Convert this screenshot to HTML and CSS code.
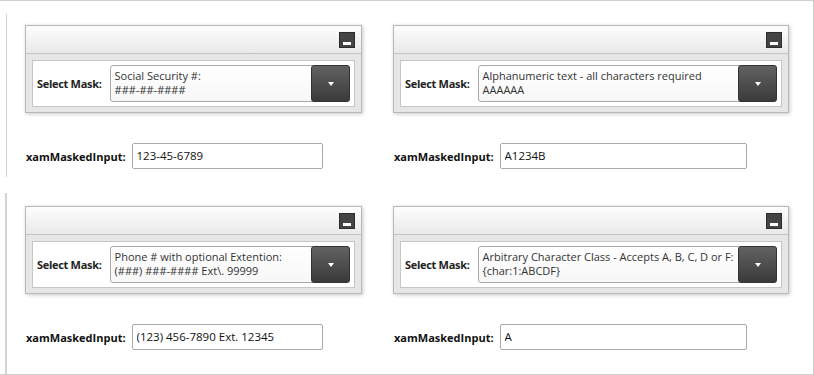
FILE: index.html
```html
<!DOCTYPE html>
<html lang="en">
<head>
  <meta charset="UTF-8">
  <title>xamMaskedInput Masks</title>
  <link rel="stylesheet" href="styles.css">
</head>
<body>
  <div class="frame">
    <div class="section section-top">
      <div class="column">
        <div class="panel">
          <div class="panel-header"><span class="min-btn"></span></div>
          <div class="panel-body">
            <div class="mask-box">
              <span class="mask-label">Select Mask:</span>
              <div class="combo">
                <div class="combo-text">Social Security #:<br>###-##-####</div>
                <span class="combo-btn"></span>
              </div>
            </div>
          </div>
        </div>
        <div class="input-row">
          <label class="input-label">xamMaskedInput:</label>
          <input class="masked-input narrow" type="text" value="123-45-6789">
        </div>
      </div>
      <div class="column">
        <div class="panel">
          <div class="panel-header"><span class="min-btn"></span></div>
          <div class="panel-body">
            <div class="mask-box">
              <span class="mask-label">Select Mask:</span>
              <div class="combo">
                <div class="combo-text">Alphanumeric text - all characters required<br>AAAAAA</div>
                <span class="combo-btn"></span>
              </div>
            </div>
          </div>
        </div>
        <div class="input-row">
          <label class="input-label">xamMaskedInput:</label>
          <input class="masked-input wide" type="text" value="A1234B">
        </div>
      </div>
    </div>

    <div class="section section-bottom">
      <div class="column">
        <div class="panel">
          <div class="panel-header"><span class="min-btn"></span></div>
          <div class="panel-body">
            <div class="mask-box">
              <span class="mask-label">Select Mask:</span>
              <div class="combo">
                <div class="combo-text">Phone # with optional Extention:<br>(###) ###-#### Ext\. 99999</div>
                <span class="combo-btn"></span>
              </div>
            </div>
          </div>
        </div>
        <div class="input-row">
          <label class="input-label">xamMaskedInput:</label>
          <input class="masked-input narrow" type="text" value="(123) 456-7890 Ext. 12345">
        </div>
      </div>
      <div class="column">
        <div class="panel">
          <div class="panel-header"><span class="min-btn"></span></div>
          <div class="panel-body">
            <div class="mask-box">
              <span class="mask-label">Select Mask:</span>
              <div class="combo">
                <div class="combo-text">Arbitrary Character Class - Accepts A, B, C, D or F:<br>{char:1:ABCDF}</div>
                <span class="combo-btn"></span>
              </div>
            </div>
          </div>
        </div>
        <div class="input-row">
          <label class="input-label">xamMaskedInput:</label>
          <input class="masked-input wide" type="text" value="A">
        </div>
      </div>
    </div>
  </div>
</body>
</html>
```

FILE: styles.css
```css
body {
  margin: 0;
  background-color: #fff;
  font-family: "Open Sans", "Noto Sans", sans-serif;
  color: #222;
}

.frame {
  width: 814px;
  height: 375px;
  box-sizing: border-box;
  border-top: 1px solid #cfcfcf;
  border-right: 1px solid #cfcfcf;
  border-bottom: 1px solid #cfcfcf;
  display: flex;
  flex-direction: column;
}

.section {
  display: grid;
  grid-template-columns: 337px 396px;
  column-gap: 31px;
  align-content: start;
  padding-left: 18px;
}

.section-top {
  margin: 13px 0 0 6px;
  height: 163px;
  padding-top: 11px;
  box-sizing: border-box;
  border-left: 1px solid #d4d4d4;
}

.section-bottom {
  margin: 16px 0 0 5px;
  flex: 1;
  padding-top: 13px;
  border-left: 2px solid #d4d4d4;
}

.panel {
  border: 1px solid #b8b8b8;
  background-color: #e6e6e6;
  box-shadow: 1px 1px 4px rgba(0, 0, 0, 0.22);
}

.panel-header {
  height: 28px;
  padding: 6px;
  box-sizing: border-box;
  display: flex;
  justify-content: flex-end;
  background: linear-gradient(#fdfdfd, #e9e9e9);
  border-bottom: 1px solid #c4c4c4;
}

.min-btn {
  position: relative;
  width: 16px;
  height: 16px;
  box-sizing: border-box;
  background-color: #444;
  border: 1px solid #2c2c2c;
}

.min-btn::after {
  content: "";
  position: absolute;
  left: 3px;
  top: 9px;
  width: 8px;
  height: 3px;
  background-color: #fff;
}

.panel-body {
  padding: 6px 6px 5px 6px;
}

.mask-box {
  display: flex;
  align-items: center;
  gap: 8px;
  padding: 4px;
  background-color: #fff;
  border: 1px solid #c6c6c6;
}

.mask-label {
  font-size: 11px;
  font-weight: bold;
  letter-spacing: -0.3px;
  white-space: nowrap;
}

.combo {
  flex: 1;
  display: flex;
  height: 37px;
  box-sizing: border-box;
  border: 1px solid #a9a9a9;
  border-radius: 3px;
  background: linear-gradient(#fff, #f7f7f7);
}

.combo-text {
  flex: 1;
  padding: 3px 0 0 4px;
  font-size: 11px;
  line-height: 14px;
  color: #333;
  white-space: nowrap;
  overflow: hidden;
}

.combo-btn {
  width: 37px;
  flex-shrink: 0;
  margin: -1px -1px -1px 0;
  border: 1px solid #333;
  border-radius: 3px;
  background: linear-gradient(#626262, #3a3a3a);
  display: flex;
  align-items: center;
  justify-content: center;
}

.combo-btn::after {
  content: "";
  border-left: 3px solid transparent;
  border-right: 3px solid transparent;
  border-top: 4px solid #fff;
}

.input-row {
  display: flex;
  align-items: center;
  gap: 6px;
  margin-top: 30px;
  padding-left: 1px;
}

.input-label {
  font-size: 11px;
  font-weight: bold;
  color: #111;
}

.masked-input {
  height: 26px;
  box-sizing: border-box;
  padding: 0 4px 2px 4px;
  border: 1px solid #aaa;
  border-radius: 2px;
  font-family: "Open Sans", "Noto Sans", sans-serif;
  font-size: 11.5px;
  color: #111;
  background-color: #fff;
}

.masked-input.narrow {
  width: 191px;
}

.masked-input.wide {
  width: 247px;
}
```
